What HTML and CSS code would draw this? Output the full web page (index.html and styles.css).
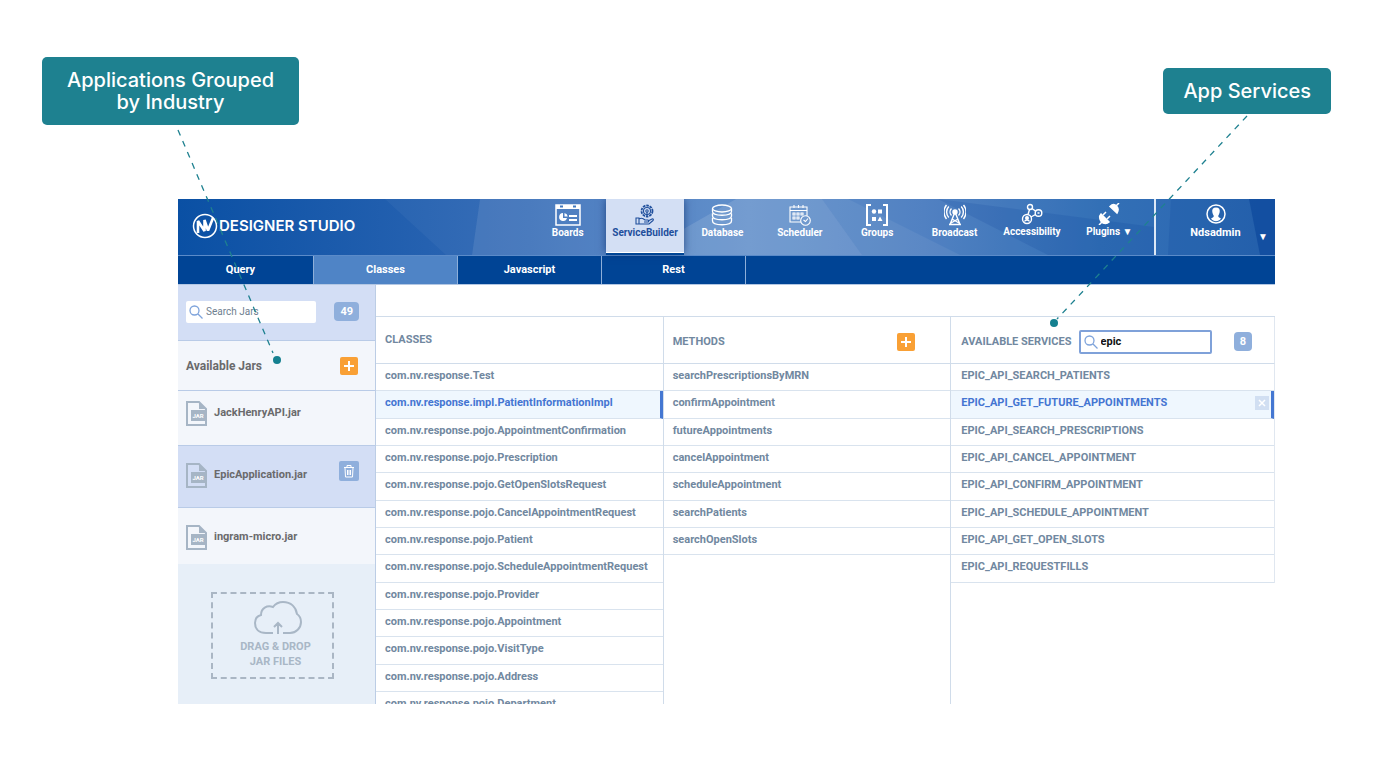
FILE: index.html
```html
<!DOCTYPE html>
<html lang="en">

<head>
    <meta charset="UTF-8">
    <meta name="viewport" content="width=device-width, initial-scale=1.0">
    <title>NV Designer Studio - Service Builder</title>
    <link rel="stylesheet" href="styles.css">
</head>

<body>
    <div class="callouts">
        <div class="callout">Applications Grouped<br>by Industry</div>
        <div class="callout callout-small">App Services</div>
    </div>

    <div class="app">
        <header class="topbar">
            <!-- Faceted background -->
            <svg class="facets" viewBox="0 0 1097 56" preserveAspectRatio="none" aria-hidden="true">
                <polygon points="207,0 302,0 294,56 268,56" fill="#fff" fill-opacity=".04" />
                <polygon points="302,0 1097,0 1097,56 294,56" fill="#fff" fill-opacity=".13" />
                <polygon points="558,0 644,0 684,56 460,56" fill="#fff" fill-opacity=".12" />
                <polygon points="644,0 670,0 782,56 684,56" fill="#fff" fill-opacity=".06" />
                <polygon points="760,0 976,28 976,56 870,56" fill="#003c94" fill-opacity=".14" />
                <polygon points="993,0 1097,0 1097,56 990,56" fill="#003c94" fill-opacity=".15" />
                <polygon points="1071,0 1097,0 1097,56 1082,56" fill="#003c94" fill-opacity=".45" />
            </svg>

            <a class="logo" href="#">
                <svg width="26" height="26" viewBox="0 0 26 26" aria-hidden="true">
                    <circle cx="13" cy="13" r="11.5" fill="none" stroke="#fff" stroke-width="1.5" />
                    <path d="M6 20V8L12.500 18V7L16 17.500L21 5" fill="none" stroke="#fff" stroke-width="2.600" stroke-linejoin="bevel" />
                </svg>
                <span>DESIGNER STUDIO</span>
            </a>

            <nav class="nav">
                <a href="#">
                    <svg width="26" height="22" viewBox="0 0 26 22" fill="none" stroke="currentColor" stroke-width="1.5">
                        <path d="M1 1h24v20H1z" />
                        <path d="M1 3h24" stroke-width="4" />
                        <path d="M5 2.500h3M18 2.500h3" stroke="#4179c0" stroke-width="2" />
                        <path d="M14 12h8M14 16h8" stroke-width="2" />
                        <path d="M8 9a4 4 0 1 0 4 5H8z" fill="currentColor" stroke="none" />
                        <path d="M9.500 9v3.500h3.200A4 4 0 0 0 9.500 9z" fill="currentColor" stroke="none" />
                    </svg>
                    Boards
                </a>
                <a href="#" class="active">
                    <svg width="22" height="22" viewBox="0 0 22 22" fill="none" stroke="currentColor" stroke-width="1.100">
                        <circle cx="13" cy="7" r="5.500" stroke-width="1.800" stroke-dasharray="2.600 0.900" />
                        <circle cx="13" cy="7" r="3.500" />
                        <circle cx="13" cy="7" r="1.200" />
                        <path d="M13 8v5" />
                        <path d="M2 14h3v6H2zM5 15c3-2 5 0 6 1h3c1 0 1 2 0 2h-4M14 17l4-2c1-.500 2 .500 1 1.500L15 20H5" />
                    </svg>
                    ServiceBuilder
                </a>
                <a href="#">
                    <svg width="22" height="22" viewBox="0 0 22 22" fill="none" stroke="currentColor" stroke-width="1.300">
                        <ellipse cx="11" cy="4.500" rx="9.500" ry="3.500" />
                        <path d="M1.500 4.500v3c0 5 19 5 19 0v-3M1.500 9.500v2.500c0 5 19 5 19 0V9.500M1.500 14v3c0 5 19 5 19 0v-3" />
                    </svg>
                    Database
                </a>
                <a href="#">
                    <svg width="22" height="22" viewBox="0 0 22 22" fill="none" stroke="currentColor" stroke-width="1.100">
                        <path d="M12 18H1V3h17v9M1 6.500h17M5 1v3M9.500 1v3M14 1v3" />
                        <path d="M4 9h2v2H4zM8 9h2v2H8zM12 9h2v2h-2zM4 13h2v2H4zM8 13h2v2H8z" />
                        <circle cx="16.500" cy="16.500" r="4.800" />
                        <path d="M14.500 16l2 1.500 2.500-3" />
                    </svg>
                    Scheduler
                </a>
                <a href="#">
                    <svg width="22" height="22" viewBox="0 0 22 22" fill="none" stroke="currentColor" stroke-width="2">
                        <path d="M5 1H1v20h4M17 1h4v20h-4" />
                        <g fill="currentColor" stroke="none">
                            <circle cx="8" cy="7.500" r="2.200" />
                            <path d="M12 5.500h4v4h-4zM6 13h4v4H6zM14 12.500l2.500 4.500h-5z" />
                        </g>
                    </svg>
                    Groups
                </a>
                <a href="#">
                    <svg width="22" height="22" viewBox="0 0 22 22" fill="none" stroke="currentColor" stroke-width="1.400">
                        <circle cx="11" cy="8" r="2" fill="currentColor" />
                        <path d="M11 8l-5 12.500M11 8l5 12.500M5 20.500h12M8 15l7 4M14 15l-7 4" />
                        <path d="M7.500 4.500a5 5 0 0 0 0 7M14.500 4.500a5 5 0 0 1 0 7M4.800 2.500a8 8 0 0 0 0 11M17.200 2.500a8 8 0 0 1 0 11M2.500 1a11 11 0 0 0 0 14M19.500 1a11 11 0 0 1 0 14" />
                    </svg>
                    Broadcast
                </a>
                <a href="#" class="raised">
                    <svg width="22" height="22" viewBox="0 0 22 22" fill="none" stroke="currentColor" stroke-width="1.400">
                        <circle cx="9" cy="4" r="2.500" />
                        <circle cx="17.500" cy="10" r="3.300" />
                        <circle cx="6" cy="16" r="4.500" />
                        <path d="M11 5.500l3.500 2.500M14.500 11.500L10 14M8.500 6.500L7 11.500" />
                        <circle cx="6" cy="15" r="1.300" fill="currentColor" />
                        <path d="M3.500 18.500c1-2 4-2 5 0M16.500 10h2" />
                    </svg>
                    Accessibility
                </a>
                <a href="#" class="raised">
                    <svg width="22" height="22" viewBox="0 0 22 22" fill="none" stroke="currentColor" stroke-width="1.500">
                        <path d="M12 3.500L19 10c1.500-2.500 1.500-5-.500-7s-4.500-1.500-6.500.500z" fill="currentColor" />
                        <path d="M3 11l8 8c-2 2-5.500 2-7.500 0S1 13 3 11z" fill="currentColor" />
                        <path d="M18 3l3-3M1 22l3-3M5 12l3-3M9 16l3-3" />
                    </svg>
                    Plugins ▼
                </a>
            </nav>

            <button class="user" type="button">
                <svg width="20" height="20" viewBox="0 0 20 20" aria-hidden="true">
                    <circle cx="10" cy="10" r="9" fill="none" stroke="#fff" stroke-width="1.500" />
                    <path d="M10 3.500c3 0 4.200 2 3.700 4.500-.300 2-1.200 3-1.500 4 .200 1.500 1.500 1.500 2.800 2.500-2.500 3.500-7.500 3.500-10 0 1.300-1 2.600-1 2.800-2.500-.300-1-1.200-2-1.500-4C5.800 5.500 7 3.500 10 3.500z" fill="#fff" />
                </svg>
                Ndsadmin
                <span class="user-arrow">▼</span>
            </button>
        </header>

        <nav class="tabs">
            <a href="#">Query</a>
            <a href="#" class="active">Classes</a>
            <a href="#">Javascript</a>
            <a href="#">Rest</a>
        </nav>

        <div class="workspace">
            <aside class="sidebar">
                <div class="jar-search">
                    <label class="search-box">
                        <svg width="14" height="14" viewBox="0 0 14 14" aria-hidden="true">
                            <path d="M9 9l4.500 4.500M10 5.500a4.500 4.500 0 1 1-9 0 4.500 4.500 0 0 1 9 0z" />
                        </svg>
                        <input type="text" placeholder="Search Jars" aria-label="Search Jars">
                    </label>
                    <span class="count">49</span>
                </div>

                <div class="jar-title">
                    <h2>Available Jars</h2>
                    <button class="add" type="button" aria-label="Add jar">
                        <svg width="18" height="18" viewBox="0 0 18 18"><path d="M9 4v10M4 9h10" /></svg>
                    </button>
                </div>

                <div class="jar-window">
                    <ul class="jar-list">
                        <li>
                            <svg class="jar-icon" width="21" height="25" viewBox="0 0 21 25" aria-hidden="true">
                                <path d="M1 1h12l7 7v16H1z" fill="none" stroke="#a6b5c5" stroke-width="2" />
                                <path d="M13 1l7 7h-7zM5 9h16v11H5z" fill="#a6b5c5" />
                                <text x="12" y="17">JAR</text>
                            </svg>
                            JackHenryAPI.jar
                        </li>
                        <li class="selected">
                            <svg class="jar-icon" width="21" height="25" viewBox="0 0 21 25" aria-hidden="true">
                                <path d="M1 1h12l7 7v16H1z" fill="none" stroke="#a6b5c5" stroke-width="2" />
                                <path d="M13 1l7 7h-7zM5 9h16v11H5z" fill="#a6b5c5" />
                                <text x="12" y="17">JAR</text>
                            </svg>
                            EpicApplication.jar
                            <button class="delete" type="button" aria-label="Delete jar">
                                <svg width="12" height="14" viewBox="0 0 12 14">
                                    <path d="M1 3.500h10M4 3V1.500h4V3M2 4l.500 9h7L10 4M4.500 6v5M6 6v5M7.500 6v5" />
                                </svg>
                            </button>
                        </li>
                        <li>
                            <svg class="jar-icon" width="21" height="25" viewBox="0 0 21 25" aria-hidden="true">
                                <path d="M1 1h12l7 7v16H1z" fill="none" stroke="#a6b5c5" stroke-width="2" />
                                <path d="M13 1l7 7h-7zM5 9h16v11H5z" fill="#a6b5c5" />
                                <text x="12" y="17">JAR</text>
                            </svg>
                            ingram-micro.jar
                        </li>
                    </ul>
                </div>

                <div class="drop-area">
                    <div class="drop-box">
                        <svg width="48" height="34" viewBox="0 0 48 34" aria-hidden="true">
                            <path d="M19 32h-7C5 32 1 28 1 22c0-4 2-7 6-8 0-7 6-10 12-8C22 2 26 1 29 1c8 0 13 5 14 12 3 2 4 5 4 8 0 6-5 11-11 11h-7M24 33V22M20 26l4-4 4 4" />
                        </svg>
                        <span>DRAG &amp; DROP<br>JAR FILES</span>
                    </div>
                </div>
            </aside>

            <main class="columns">
                <section class="column">
                    <div class="column-head head-classes">
                        <h3>CLASSES</h3>
                    </div>
                    <ul class="rows">
                        <li>com.nv.response.Test</li>
                        <li class="selected">com.nv.response.impl.PatientInformationImpl</li>
                        <li>com.nv.response.pojo.AppointmentConfirmation</li>
                        <li>com.nv.response.pojo.Prescription</li>
                        <li>com.nv.response.pojo.GetOpenSlotsRequest</li>
                        <li>com.nv.response.pojo.CancelAppointmentRequest</li>
                        <li>com.nv.response.pojo.Patient</li>
                        <li>com.nv.response.pojo.ScheduleAppointmentRequest</li>
                        <li>com.nv.response.pojo.Provider</li>
                        <li>com.nv.response.pojo.Appointment</li>
                        <li>com.nv.response.pojo.VisitType</li>
                        <li>com.nv.response.pojo.Address</li>
                        <li>com.nv.response.pojo.Department</li>
                    </ul>
                </section>

                <section class="column">
                    <div class="column-head">
                        <h3>METHODS</h3>
                        <button class="add" type="button" aria-label="Add method">
                            <svg width="18" height="18" viewBox="0 0 18 18"><path d="M9 4v10M4 9h10" /></svg>
                        </button>
                    </div>
                    <ul class="rows">
                        <li>searchPrescriptionsByMRN</li>
                        <li>confirmAppointment</li>
                        <li>futureAppointments</li>
                        <li>cancelAppointment</li>
                        <li>scheduleAppointment</li>
                        <li>searchPatients</li>
                        <li>searchOpenSlots</li>
                    </ul>
                </section>

                <section class="column services">
                    <div class="column-head">
                        <h3>AVAILABLE SERVICES</h3>
                        <label class="search-box outlined">
                            <svg width="14" height="14" viewBox="0 0 14 14" aria-hidden="true">
                                <path d="M9 9l4.500 4.500M10 5.500a4.500 4.500 0 1 1-9 0 4.500 4.500 0 0 1 9 0z" />
                            </svg>
                            <input type="text" value="epic" aria-label="Search services">
                        </label>
                        <span class="count">8</span>
                    </div>
                    <ul class="rows">
                        <li>EPIC_API_SEARCH_PATIENTS</li>
                        <li class="selected">EPIC_API_GET_FUTURE_APPOINTMENTS
                            <button class="remove" type="button" aria-label="Remove service">
                                <svg width="14" height="14" viewBox="0 0 14 14"><path d="M4 4l6 6M10 4l-6 6" /></svg>
                            </button>
                        </li>
                        <li>EPIC_API_SEARCH_PRESCRIPTIONS</li>
                        <li>EPIC_API_CANCEL_APPOINTMENT</li>
                        <li>EPIC_API_CONFIRM_APPOINTMENT</li>
                        <li>EPIC_API_SCHEDULE_APPOINTMENT</li>
                        <li>EPIC_API_GET_OPEN_SLOTS</li>
                        <li>EPIC_API_REQUESTFILLS</li>
                    </ul>
                </section>
            </main>
        </div>
    </div>

    <!-- Callout pointers -->
    <svg class="pointer pointer-left" width="120" height="240" viewBox="0 0 120 240" aria-hidden="true">
        <path d="M8 5L103 228" />
        <circle cx="107" cy="235" r="4" />
    </svg>
    <svg class="pointer pointer-right" width="200" height="220" viewBox="0 0 200 220" aria-hidden="true">
        <path d="M197 6L7 209" />
        <circle cx="4" cy="213" r="4" />
    </svg>
</body>

</html>
```
FILE: styles.css
```css
* {
    box-sizing: border-box;
}

body {
    position: relative;
    display: flex;
    flex-direction: column;
    height: 100vh;
    margin: 0;
    padding: 57px 53px 57px 42px;
    background: #fff;
    color: #7188a0;
    font-family: Roboto, Arial, sans-serif;
    font-size: 11px;
    font-weight: bold;
    line-height: 16px;
}

h2,
h3,
ul {
    margin: 0;
    padding: 0;
}

ul {
    list-style: none;
}

a {
    color: inherit;
    text-decoration: none;
}

button {
    padding: 0;
    border: 0;
    font: inherit;
    cursor: pointer;
}

svg {
    display: block;
}

/* Callouts */
.callouts {
    display: flex;
    justify-content: space-between;
    align-items: center;
    margin-bottom: 74px;
}

.callout {
    padding: 12px 25px;
    border-radius: 5px;
    background: #1e8190;
    color: #fff;
    font-family: Inter, sans-serif;
    font-size: 20px;
    font-weight: 500;
    line-height: 22px;
    text-align: center;
}

.callout-small {
    padding: 12px 20px;
}

.pointer {
    position: absolute;
    pointer-events: none;
}

.pointer path {
    fill: none;
    stroke: #1e8190;
    stroke-width: 1.3;
    stroke-dasharray: 6 6;
}

.pointer circle {
    fill: #148090;
}

.pointer-left {
    top: 125px;
    left: 170px;
}

.pointer-right {
    top: 110px;
    right: 134px;
}

/* Application window */
.app {
    display: flex;
    flex: 1;
    flex-direction: column;
    min-height: 0;
    margin: 0 56px 0 136px;
    overflow: hidden;
}

.topbar {
    position: relative;
    display: flex;
    justify-content: space-between;
    height: 56px;
    background: linear-gradient(90deg, #0a50a4, #3068b5 32%, #4a7fc3 52%, #386fb9 68%, #155bac 84%, #0b50a5);
    color: #fff;
}

.facets {
    position: absolute;
    width: 100%;
    height: 100%;
}

.logo,
.nav,
.user {
    position: relative;
}

.logo {
    display: flex;
    align-items: center;
    gap: 1px;
    padding: 0 0 3px 14px;
    font-family: Inter, sans-serif;
    font-size: 15px;
    font-weight: 600;
}

.nav {
    display: grid;
    grid-template-columns: repeat(8, 1fr);
    width: 625px;
    margin-left: auto;
    padding-right: 6px;
    font-size: 10px;
    white-space: nowrap;
}

.nav a {
    display: flex;
    flex-direction: column;
    align-items: center;
    gap: 1px;
    padding-top: 5px;
    line-height: 12px;
}

.nav a svg {
    flex-shrink: 0;
    height: 22px;
}

.nav .raised {
    padding-top: 4px;
}

.nav .active {
    margin-bottom: 2px;
    border-bottom: 1px solid #fff;
    background: #d3dff4;
    box-shadow: 0 2px 0 #004595, 0 0 8px rgba(0, 30, 90, 0.6);
    color: #1f4f9c;
}

.user {
    display: flex;
    flex-direction: column;
    align-items: center;
    gap: 3px;
    width: 121px;
    padding-top: 5px;
    border-left: 2px solid #dde8f6;
    background: none;
    color: #fff;
    font-size: 11px;
    line-height: 12px;
}

.user-arrow {
    position: absolute;
    right: 7px;
    bottom: 12px;
    font-size: 10px;
}

.tabs {
    display: flex;
    flex-shrink: 0;
    height: 30px;
    border-top: 1px solid #5b8bc9;
    border-bottom: 1px solid #b3c7e3;
    background: #004495;
    color: #fff;
    line-height: 28px;
    text-align: center;
}

.tabs a {
    width: 144px;
    border-right: 1px solid #8eafd9;
}

.tabs a:first-child {
    width: 136px;
    padding-right: 10px;
}

.tabs .active {
    background: #4f84c6;
}

.workspace {
    display: flex;
    flex: 1;
    min-height: 0;
}

/* Sidebar */
.sidebar {
    display: flex;
    flex-direction: column;
    width: 198px;
    border-right: 1px solid #bccde5;
    background: #f3f6fb;
    color: #6a6a6c;
}

.jar-search {
    display: flex;
    justify-content: space-between;
    align-items: center;
    height: 56px;
    padding: 0 16px 2px 8px;
    border-bottom: 1px solid #b9cbe7;
    background: #d3def5;
}

.search-box {
    display: flex;
    flex-shrink: 0;
    align-items: center;
    gap: 3px;
    width: 130px;
    height: 22px;
    padding: 0 3px;
    border-radius: 2px;
    background: #fff;
}

.search-box svg {
    flex-shrink: 0;
    fill: none;
    stroke: #7ea3db;
    stroke-width: 1.3;
}

.search-box input {
    width: 100%;
    min-width: 0;
    padding: 0;
    border: 0;
    outline: none;
    background: none;
    color: #222;
    font-family: inherit;
    font-size: 10px;
}

.search-box input::placeholder {
    color: #6f8090;
}

.outlined {
    width: 133px;
    height: 24px;
    border: 2px solid #7fa1d9;
}

.outlined input {
    color: #111;
    font-size: 11px;
    font-weight: bold;
}

.count {
    min-width: 18px;
    padding: 0 6px;
    border-radius: 4px;
    background: #8fafdc;
    color: #fff;
    line-height: 19px;
    text-align: center;
}

.jar-title {
    display: flex;
    justify-content: space-between;
    align-items: center;
    height: 50px;
    padding: 0 17px 0 8px;
    border-bottom: 1px solid #b9cbe7;
}

.jar-title h2 {
    font-size: 12px;
}

.add {
    border-radius: 2px;
    background: #f9a035;
}

.add path {
    stroke: #fff;
    stroke-width: 2;
}

.jar-window {
    height: 173px;
    overflow: hidden;
}

/* The list is scrolled a little way down */
.jar-list {
    margin-top: -7px;
}

.jar-list li {
    display: flex;
    align-items: center;
    gap: 7px;
    height: 62px;
    padding: 0 16px 3px 8px;
    border-bottom: 1px solid #b9cbe7;
    font-size: 11px;
}

.jar-list .selected {
    background: #d3def5;
}

.jar-icon text {
    fill: #fff;
    font-size: 6px;
    text-anchor: middle;
}

.delete {
    margin: 0 0 8px auto;
    padding: 3px 4px;
    border-radius: 2px;
    background: #8fafdc;
}

.delete path {
    fill: none;
    stroke: #fff;
}

.drop-area {
    flex: 1;
    padding: 28px 41px 0 33px;
    background: #e7eff8;
    color: #a9b7c6;
    font-size: 11px;
    line-height: 15px;
    text-align: center;
}

.drop-box {
    display: flex;
    flex-direction: column;
    align-items: center;
    gap: 4px;
    padding: 7px 0 8px;
    border: 2px dashed #aab6c4;
}

.drop-box svg {
    margin-left: 10px;
}

.drop-box span {
    margin-left: 6px;
}

.drop-box path {
    fill: none;
    stroke: #a9b7c6;
    stroke-width: 2;
}

/* Classes, methods and services */
.columns {
    display: grid;
    flex: 1;
    grid-template-columns: 32% 32% 36%;
    margin-top: 31px;
    border-top: 1px solid #d0dcea;
    overflow: hidden;
}

.column {
    border-right: 1px solid #d0dcea;
}

.services {
    border-right: 0;
}

.services .column-head,
.services .rows {
    border-right: 1px solid #e0e7f0;
}

.column-head {
    display: flex;
    justify-content: space-between;
    align-items: center;
    height: 47px;
    padding: 3px 35px 0 9px;
    border-bottom: 1px solid #d0dcea;
}

.column-head h3 {
    font-size: 11px;
    white-space: nowrap;
}

.head-classes {
    padding-top: 0;
}

.services .column-head {
    gap: 7px;
    padding-right: 22px;
    padding-left: 10px;
}

.services .count {
    margin-left: auto;
}

.services .rows li {
    padding-left: 10px;
}

.rows li {
    height: 27px;
    padding-left: 9px;
    border-bottom: 1px solid #d9e3ee;
    line-height: 24px;
    white-space: nowrap;
}

.rows li:nth-child(3n + 2) {
    height: 28px;
}

.rows .selected {
    display: flex;
    justify-content: space-between;
    align-items: flex-start;
    border-right: 3px solid #4477d2;
    background: #eff7fe;
    color: #4475d2;
}

.remove {
    margin: 5px 2px 0 0;
    background: #d1dff2;
}

.remove path {
    stroke: #fff;
    stroke-width: 1.5;
}
```
